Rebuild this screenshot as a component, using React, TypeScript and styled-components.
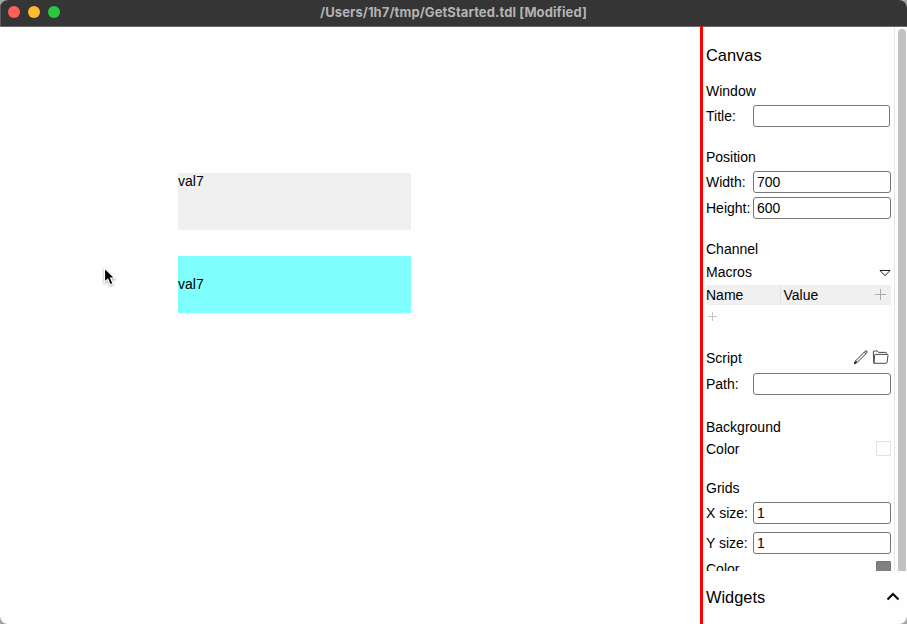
import React from "react";
import styled, { createGlobalStyle } from "styled-components";

const GlobalStyle = createGlobalStyle`
  * { box-sizing: border-box; }
  html, body { margin: 0; padding: 0; background: #a4a4a4; overflow: hidden; }
`;

const AppWindow = styled.div`
  position: relative;
  display: flex;
  flex-direction: column;
  width: 907px;
  height: 624px;
  overflow: hidden;
  border-radius: 8px;
  background: #fefefe;
  color: #000;
  font: 14px "Liberation Sans", Arial, sans-serif;
`;

const TitleBar = styled.header`
  display: flex;
  align-items: center;
  flex: none;
  height: 26px;
  padding: 0 8px 2px;
  background: #353535;
  border-left: 1px solid #5c5c5c;
`;

const Lights = styled.div`
  display: flex;
  gap: 8px;
  width: 52px;
  margin-left: -1px;
`;

const Light = styled.span<{ $color: string }>`
  width: 12px;
  height: 12px;
  border-radius: 50%;
  background: ${(p) => p.$color};
`;

const WindowTitle = styled.h1`
  flex: 1;
  margin: 0 52px 0 0;
  text-align: center;
  color: #b3b3b3;
  font: 700 13px/20px Inter, sans-serif;
  letter-spacing: 0.09px;
`;

const Body = styled.div`
  display: flex;
  flex: 1;
  min-height: 0;
`;

const Canvas = styled.main`
  position: relative;
  width: 700px;
  flex: none;
  border-top: 1px solid #6a6a6a;
`;

const Label = styled.div<{ $top: number; $color: string; $middle?: boolean }>`
  position: absolute;
  left: 178px;
  top: ${(p) => p.$top}px;
  display: flex;
  align-items: ${(p) => (p.$middle ? "center" : "flex-start")};
  width: 233px;
  height: 57px;
  padding-bottom: ${(p) => (p.$middle ? 2 : 0)}px;
  background: ${(p) => p.$color};
  line-height: 16px;
`;

const Pointer = styled.svg`
  position: absolute;
  left: 101px;
  top: 238px;
  filter: drop-shadow(0 1px 1px rgba(0, 0, 0, 0.35));
`;

const Sidebar = styled.aside`
  display: flex;
  flex-direction: column;
  width: 207px;
  border-left: 3px solid #ff0000;
`;

const ScrollArea = styled.div`
  display: flex;
  height: 545px;
  flex: none;
  overflow: hidden;
  border-top: 1px solid #6a6a6a;
`;

const Properties = styled.div`
  width: 192px;
  flex: none;
  height: 100%;
  padding-left: 3px;
  overflow: hidden;
  border-right: 1px solid #e6e6e6;
`;

const ScrollThumb = styled.div`
  width: 8px;
  height: 560px;
  margin: 2px 0 0 3px;
  border-radius: 4px;
  background: #c1c1c1;
`;

const Heading = styled.h2`
  margin: 18px 0 0;
  font-size: 16.4px;
  font-weight: 400;
  line-height: 20px;
`;

const Row = styled.div<{ $gap?: number; $height?: number }>`
  display: flex;
  align-items: center;
  width: 185px;
  height: ${(p) => p.$height ?? 16}px;
  margin-top: ${(p) => p.$gap ?? 0}px;
  line-height: 16px;
`;

const FieldName = styled.label`
  width: 47px;
  flex: none;
  white-space: nowrap;
`;

const Field = styled.input<{ $short?: boolean }>`
  width: ${(p) => (p.$short ? 137 : 138)}px;
  height: 22px;
  padding: 0 3px;
  border: 1px solid #767676;
  border-radius: 3px;
  background: #fff;
  color: #000;
  font: 14px "Liberation Sans", Arial, sans-serif;
  outline: none;
`;

const Trailing = styled.span<{ $right?: number; $lift?: number }>`
  display: flex;
  align-items: center;
  gap: 3px;
  margin-left: auto;
  margin-right: ${(p) => p.$right ?? 0}px;
  margin-bottom: ${(p) => (p.$lift ?? 0) * 2}px;
`;

const TableHead = styled.div`
  display: flex;
  align-items: center;
  width: 185px;
  height: 20px;
  margin-top: 5px;
  background: #f0f0f0;
`;

const NameCell = styled.span`
  width: 75px;
  height: 20px;
  line-height: 20px;
  border-right: 1px solid #e2e2e2;
`;

const ValueCell = styled.span`
  padding-left: 2.5px;
  line-height: 20px;
`;

const Swatch = styled.span<{ $color: string; $edge: string }>`
  width: 15px;
  height: 15px;
  border: 1px solid ${(p) => p.$edge};
  border-radius: 1px;
  background: ${(p) => p.$color};
`;

const WidgetsBar = styled.footer`
  display: flex;
  align-items: center;
  justify-content: space-between;
  height: 52px;
  padding: 0 7px 0 3px;
  font-size: 16.4px;
`;

function Plus({ size, color }: { size: number; color: string }) {
  const c = size / 2;
  return (
    <svg width={size} height={size} fill="none" stroke={color}>
      <path d={`M${c} 0V${size}M0 ${c}H${size}`} />
    </svg>
  );
}

function Pencil() {
  return (
    <svg width="16" height="16" viewBox="0 0 16 16" fill="none" stroke="#222" strokeWidth="0.9" strokeLinejoin="round">
      <path d="M1.4 14.6L2.6 11.9L12 2.3Q12.9 1.3 13.8 2.1Q14.6 3 13.7 3.9L4.2 13.4Z" />
      <path d="M2.6 11.9L4.2 13.4M11.2 3.1L12.9 4.7" />
      <path d="M1.4 14.6L2.1 13L3.1 13.9Z" fill="#222" />
    </svg>
  );
}

function Folder() {
  return (
    <svg width="17" height="16" viewBox="0 0 17 16" fill="none" stroke="#333" strokeWidth="0.9" strokeLinejoin="round">
      <path d="M1.9 14.3L1.3 3Q1.3 2 2.2 2H5.3L6.5 3.4H13.5Q14.4 3.4 14.4 4.3V5.3" />
      <path d="M1.9 14.3L2.6 6.2Q2.7 5.4 3.5 5.4H15.2Q16.1 5.4 16 6.2L15.1 13.5Q15 14.3 14.2 14.3Z" />
    </svg>
  );
}

export default function App() {
  return (
    <>
      <GlobalStyle />
      <AppWindow>
        <TitleBar>
          <Lights>
            <Light $color="#ff5f57" />
            <Light $color="#febc2e" />
            <Light $color="#28c840" />
          </Lights>
          <WindowTitle>/Users/1h7/tmp/GetStarted.tdl [Modified]</WindowTitle>
        </TitleBar>
        <Body>
          <Canvas>
            <Label $top={146} $color="#f0f0f0">val7</Label>
            <Label $top={229} $color="#80ffff" $middle>val7</Label>
            <Pointer width="16" height="24" viewBox="0 0 16 24">
              <path
                d="M3.5 3V17.2L6.8 14.2L9.2 19.7L12 18.5L9.6 13.2H14Z"
                fill="#000"
                stroke="#fff"
                strokeWidth="1.2"
              />
            </Pointer>
          </Canvas>
          <Sidebar>
            <ScrollArea>
              <Properties>
                <Heading>Canvas</Heading>
                <Row $gap={18}>Window</Row>
                <Row $gap={6} $height={22}>
                  <FieldName>Title:</FieldName>
                  <Field $short aria-label="Title" />
                </Row>
                <Row $gap={22}>Position</Row>
                <Row $gap={6} $height={22}>
                  <FieldName>Width:</FieldName>
                  <Field defaultValue="700" />
                </Row>
                <Row $gap={4} $height={22}>
                  <FieldName>Height:</FieldName>
                  <Field defaultValue="600" />
                </Row>
                <Row $gap={22}>Channel</Row>
                <Row $gap={7}>
                  Macros
                  <Trailing $lift={-1}>
                    <svg width="12" height="8" fill="none" stroke="#222">
                      <path d="M1 1.5H11L6 6.7Z" />
                    </svg>
                  </Trailing>
                </Row>
                <TableHead>
                  <NameCell>Name</NameCell>
                  <ValueCell>Value</ValueCell>
                  <Trailing $right={5} $lift={0.5}><Plus size={11} color="#aaa" /></Trailing>
                </TableHead>
                <Row $gap={4} $height={17}>
                  <Trailing $right={174} $lift={1}><Plus size={9} color="#c8c8c8" /></Trailing>
                </Row>
                <Row $gap={24}>
                  Script
                  <Trailing $right={2} $lift={1}><Pencil /><Folder /></Trailing>
                </Row>
                <Row $gap={7} $height={22}>
                  <FieldName>Path:</FieldName>
                  <Field aria-label="Path" />
                </Row>
                <Row $gap={24}>Background</Row>
                <Row $gap={6}>
                  Color
                  <Trailing $lift={1}><Swatch $color="#fefefe" $edge="#e2e2e2" /></Trailing>
                </Row>
                <Row $gap={23}>Grids</Row>
                <Row $gap={6} $height={22}>
                  <FieldName>X size:</FieldName>
                  <Field defaultValue="1" />
                </Row>
                <Row $gap={8} $height={22}>
                  <FieldName>Y size:</FieldName>
                  <Field defaultValue="1" />
                </Row>
                <Row $gap={7}>
                  Color
                  <Trailing $lift={1}><Swatch $color="#808080" $edge="#777" /></Trailing>
                </Row>
              </Properties>
              <ScrollThumb />
            </ScrollArea>
            <WidgetsBar>
              Widgets
              <svg width="14" height="10" fill="none" stroke="#000" strokeWidth="2">
                <path d="M1.5 7.5L7 2L12.5 7.5" />
              </svg>
            </WidgetsBar>
          </Sidebar>
        </Body>
      </AppWindow>
    </>
  );
}
